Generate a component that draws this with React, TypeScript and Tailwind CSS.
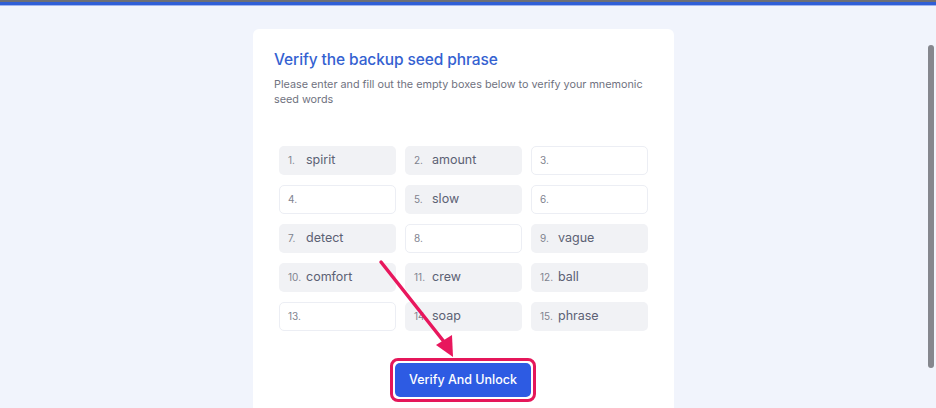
import React from "react";

const words: [number, string][] = [
  [1, "spirit"], [2, "amount"], [3, ""],
  [4, ""], [5, "slow"], [6, ""],
  [7, "detect"], [8, ""], [9, "vague"],
  [10, "comfort"], [11, "crew"], [12, "ball"],
  [13, ""], [14, "soap"], [15, "phrase"],
];

export default function App() {
  return (
    <div className="relative w-[936px] h-[408px] overflow-hidden bg-[#f1f4fc]" style={{ fontFamily: "Inter, 'Open Sans', sans-serif" }}>
      <div className="h-[2px] bg-[#6d6f75]" />
      <div className="h-[3px] bg-[#2f5fd6]" />
      <div className="h-[1px] bg-[#9fb4ee]" />
      <div className="flex justify-start pl-[253px] pt-[23px]">
        <div className="w-[421px] h-[400px] bg-white rounded-[6px] pl-[21px] pr-[20px] pt-[20px]">
          <h1 className="text-[15.5px] font-medium text-[#3461d1] leading-[22px] tracking-[-0.1px]">Verify the backup seed phrase</h1>
          <p className="mt-[6px] text-[10.8px] leading-[15px] text-[#6f7280] pr-[10px]">
            Please enter and fill out the empty boxes below to verify your mnemonic seed words
          </p>
          <div className="mt-[39px] ml-[5px] grid grid-cols-[117px_117px_117px] gap-x-[9px] gap-y-[10px]">
            {words.map(([n, w]) => (
              <div
                key={n}
                className={
                  w
                    ? "h-[29px] rounded-[5px] bg-[#f1f2f5] flex items-center pl-[9px]"
                    : "h-[29px] rounded-[5px] bg-white border border-[#eceef4] flex items-center pl-[8px]"
                }
              >
                <span className="text-[10px] text-[#80838f] w-[17px] shrink-0">{n}.</span>
                {w && <span className="ml-[1px] text-[12.5px] text-[#5c6174]">{w}</span>}
              </div>
            ))}
          </div>
          <div className="mt-[27px] flex justify-center pr-[2px]">
            <div className="border-[3px] border-[#e5175a] rounded-[8px] p-[2px]">
              <button className="w-[136px] h-[34px] rounded-[5px] bg-[#2d5be3] text-white text-[12.5px] font-medium">
                Verify And Unlock
              </button>
            </div>
          </div>
        </div>
      </div>
      <svg className="absolute left-0 top-0 pointer-events-none" width="936" height="408">
        <line x1="381" y1="262" x2="445" y2="343" stroke="#e8175d" strokeWidth="3.5" strokeLinecap="round" />
        <polygon points="453,357 436,345 452,335" fill="#e8175d" />
      </svg>
      <div className="absolute left-[928px] top-[45px] w-[6px] h-[323px] rounded-full bg-[#85878e]" />
    </div>
  );
}
